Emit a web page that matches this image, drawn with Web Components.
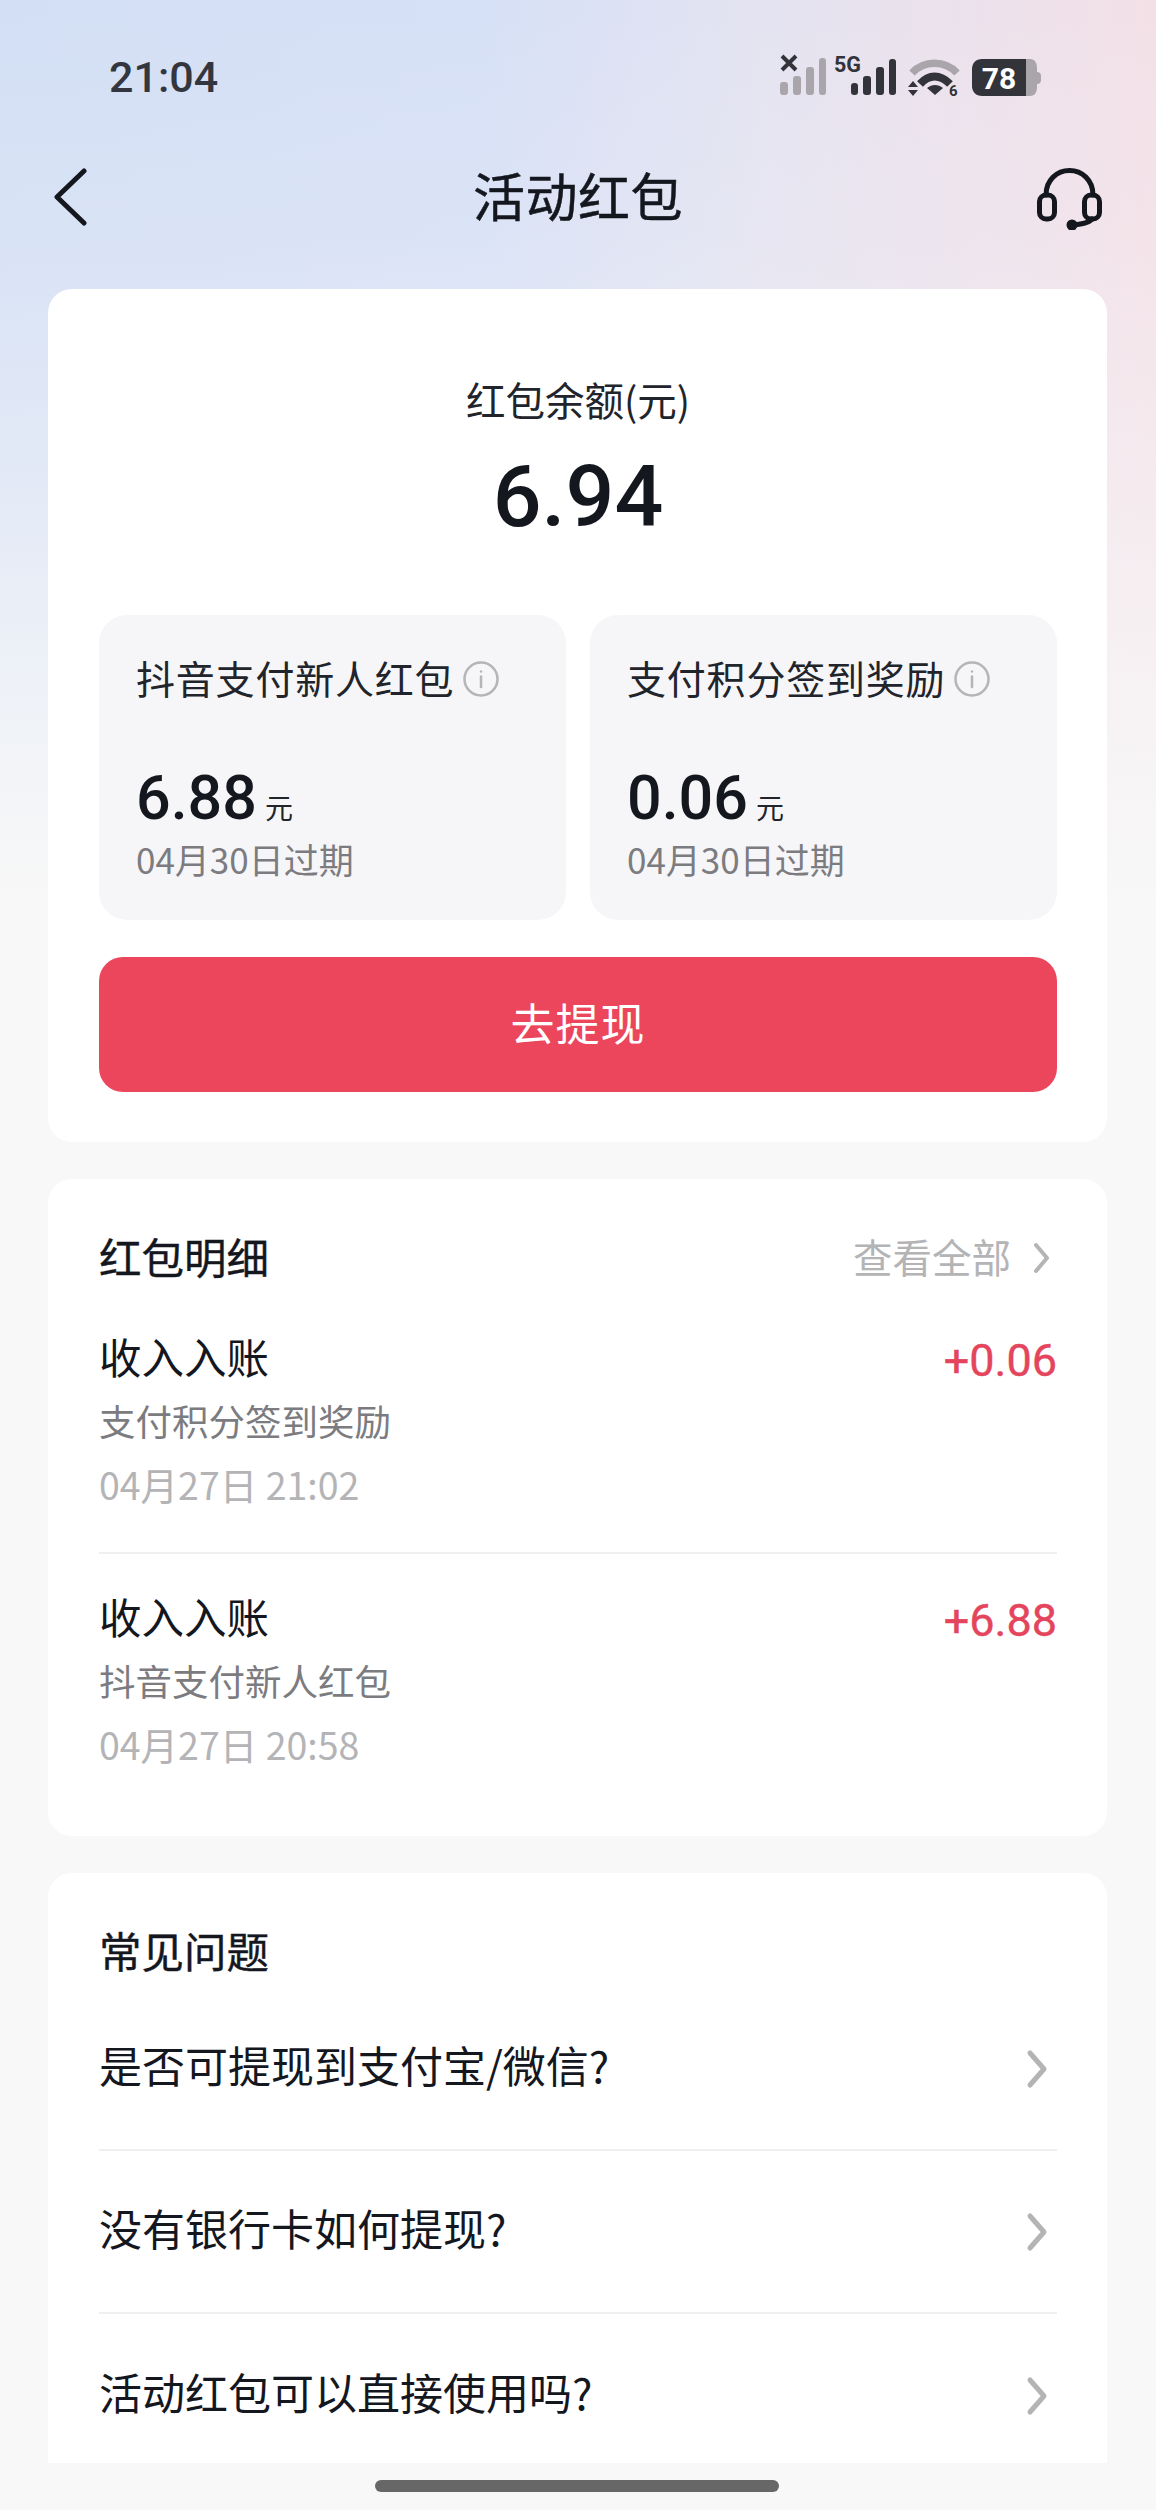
<!doctype html>
<html lang="zh">
<head>
<meta charset="utf-8">
<title>活动红包</title>
<style>
  html, body { margin: 0; padding: 0; background: #f8f8f8; }
  body { font-family: "Noto Sans CJK SC", "Noto Sans", sans-serif; color: #15171f; }
</style>
</head>
<body>
<red-page>
  <status-bar></status-bar>
  <nav-bar title="活动红包"></nav-bar>
  <balance-card label="红包余额(元)" amount="6.94" action="去提现">
    <sub-card title="抖音支付新人红包" amount="6.88" expire="04月30日过期"></sub-card>
    <sub-card title="支付积分签到奖励" amount="0.06" expire="04月30日过期"></sub-card>
  </balance-card>
  <detail-card title="红包明细" more="查看全部">
    <detail-row title="收入入账" source="支付积分签到奖励" time="04月27日 21:02" amount="+0.06"></detail-row>
    <detail-row title="收入入账" source="抖音支付新人红包" time="04月27日 20:58" amount="+6.88"></detail-row>
  </detail-card>
  <faq-card title="常见问题">
    <faq-row text="是否可提现到支付宝/微信?"></faq-row>
    <faq-row text="没有银行卡如何提现?"></faq-row>
    <faq-row text="活动红包可以直接使用吗?"></faq-row>
  </faq-card>
</red-page>

<script>
  const NUM_FONT = 'Roboto, "Noto Sans CJK SC", sans-serif';
  const CJK_FONT = '"Noto Sans CJK SC", sans-serif';

  function define(name, css, render) {
    customElements.define(name, class extends HTMLElement {
      connectedCallback() {
        if (this.shadowRoot) return;
        const root = this.attachShadow({mode: 'open'});
        root.innerHTML = '<style>' + css + '</style>' + render(n => this.getAttribute(n) || '');
      }
    });
  }

  const chevron = (w, h, color, sw) => `<svg width="${w}" height="${h}" viewBox="0 0 ${w} ${h}" fill="none">
    <path d="M${sw} ${sw}L${w - sw} ${h / 2}L${sw} ${h - sw}" stroke="${color}" stroke-width="${sw}" stroke-linecap="round" stroke-linejoin="round"/></svg>`;

  define('red-page', `
    :host {
      display: flex; flex-direction: column;
      width: 1156px; height: 2510px; overflow: hidden; position: relative;
      background:
        linear-gradient(to bottom, rgba(248,248,248,0) 0, rgba(248,248,248,.15) 240px, rgba(248,248,248,.45) 500px, rgba(248,248,248,.75) 700px, rgba(248,248,248,1) 900px),
        linear-gradient(90deg, #d3dff5 0%, #d6e0f6 42%, #e4e3f1 66%, #f3e0e7 100%);
    }
    .home {
      position: absolute; left: 375px; top: 2480px; width: 404px; height: 12px;
      border-radius: 6px; background: #676767;
    }
  `, () => `<slot></slot><div class="home"></div>`);

  define('status-bar', `
    :host { display: flex; justify-content: space-between; align-items: center; height: 154px; padding: 0 111px 0 109px; box-sizing: border-box; }
    .time { font: 500 43px/1 Roboto, sans-serif; color: #33363f; }
    svg { display: block; }
  `, () => `<span class="time">21:04</span>
    <svg width="270" height="50" viewBox="775 52 270 50">
      <g fill="#a9a5ab">
        <rect x="780" y="82" width="8" height="13" rx="3"/><rect x="793" y="76" width="8" height="19" rx="3"/>
        <rect x="806" y="67" width="8" height="28" rx="3"/><rect x="819" y="58" width="7" height="37" rx="3"/>
      </g>
      <path d="M782 56L796 70M796 56L782 70" stroke="#33333a" stroke-width="4"/>
      <text x="834" y="72" font-family="Roboto, sans-serif" font-weight="700" font-size="21.500" fill="#33333a">5G</text>
      <g fill="#33333a">
        <rect x="851" y="83" width="7" height="12" rx="3"/><rect x="863" y="76" width="8" height="19" rx="3"/>
        <rect x="876" y="67" width="8" height="28" rx="3"/><rect x="889" y="59" width="7" height="36" rx="3"/>
      </g>
      <path d="M912 73C924 60 945 60 957 73" fill="none" stroke="#a9a5ab" stroke-width="7.500"/>
      <path d="M920 84C929 74 940 74 950 84" fill="none" stroke="#33333a" stroke-width="8"/>
      <path d="M927 88C932 84 938 84 943 88L935 95Z" fill="#33333a"/>
      <path d="M908 87L913 81L918 87ZM908 90L918 90L913 96Z" fill="#33333a"/>
      <text x="949" y="96" font-family="Roboto, sans-serif" font-weight="700" font-size="15" fill="#33333a">6</text>
      <path d="M1026 59H1030C1035 59 1037 63 1037 68V72C1040 72 1041 74 1041 76V80C1041 82 1040 84 1037 84V87C1037 92 1035 96 1030 96H1026Z" fill="#a9a5ab"/>
      <path d="M982 59H1026V96H982C976 96 972 92 972 86V69C972 63 976 59 982 59Z" fill="#33333a"/>
      <text x="999" y="89" text-anchor="middle" font-family="Roboto, sans-serif" font-weight="700" font-size="30" fill="#fff">78</text>
    </svg>`);

  define('nav-bar', `
    :host { display: grid; grid-template-columns: 1fr auto 1fr; align-items: center; height: 86px; padding: 0 54px; margin-bottom: 49px; }
    h1 { font: 400 52px/1 ${CJK_FONT}; margin: -5px 0 0; color: #15171f; letter-spacing: .5px; -webkit-text-stroke: .5px #15171f; }
    svg { display: block; }
    .end { justify-self: end; margin-top: 4px; }
  `, a => `
    <svg width="34" height="58" viewBox="0 0 34 58" fill="none">
      <path d="M30 3L3 29L30 55" stroke="#15171f" stroke-width="5" stroke-linecap="round" stroke-linejoin="round"/></svg>
    <h1>${a('title')}</h1>
    <svg class="end" width="65" height="62" viewBox="0 0 65 62" fill="none" stroke="#15171f" stroke-width="5" stroke-linecap="round">
      <path d="M9 27C9 12 20 2.500 32.500 2.500C45 2.500 56 12 56 27"/>
      <rect x="2.500" y="27" width="15" height="24" rx="6.500"/>
      <rect x="47.500" y="27" width="15" height="24" rx="6.500"/>
      <path d="M55 51C52 55 45 56 37 57"/>
      <circle cx="35" cy="57" r="3" fill="#15171f"/>
    </svg>`);

  define('balance-card', `
    :host { display: block; margin: 0 49px 37px 48px; background: #fff; border-radius: 24px; padding: 82px 50px 50px 51px; height: 853px; box-sizing: border-box; }
    .label { font: 400 39.500px/56px ${CJK_FONT}; text-align: center; color: #22242b; }
    .amount { font: 500 86px/100px ${NUM_FONT}; text-align: center; color: #15171f; margin-top: 20px; }
    .subs { display: grid; grid-template-columns: 467px 467px; gap: 24px; margin-top: 68px; }
    button {
      display: block; width: 100%; height: 135px; margin-top: 37px; border: 0; border-radius: 24px; padding-bottom: 6px;
      background: #ec465d; color: #fff; font: 400 44px/1 ${CJK_FONT}; letter-spacing: 1px;
    }
  `, a => `
    <div class="label">${a('label')}</div>
    <div class="amount">${a('amount')}</div>
    <div class="subs"><slot></slot></div>
    <button>${a('action')}</button>`);

  define('sub-card', `
    :host { display: block; height: 305px; box-sizing: border-box; background: #f6f6f8; border-radius: 28px; padding: 35px 0 0 37px; }
    .title { display: flex; align-items: center; font: 400 39px/54px ${CJK_FONT}; color: #22242b; white-space: nowrap; letter-spacing: .8px; }
    svg { margin-left: 9px; flex: none; margin-top: 3px; }
    .value { display: flex; align-items: baseline; margin-top: 56px; height: 76px; }
    .num { font: 500 61px/76px ${NUM_FONT}; color: #15171f; }
    .unit { font: 400 28px/1 ${CJK_FONT}; color: #22242b; margin-left: 8px; }
    .exp { font: 400 35px/46px ${CJK_FONT}; color: #7c7c80; margin-top: 0; }
  `, a => `
    <div class="title">${a('title')}
      <svg width="36" height="36" viewBox="0 0 36 36" fill="none" stroke="#b5b5b7" stroke-width="2.500">
        <circle cx="18" cy="18" r="16.500"/><path d="M18 15.500V26" stroke-linecap="round"/><circle cx="18" cy="10.500" r="1.200" fill="#b5b5b7" stroke="none"/>
      </svg></div>
    <div class="value"><span class="num">${a('amount')}</span><span class="unit">元</span></div>
    <div class="exp">${a('expire')}</div>`);

  define('detail-card', `
    :host { display: block; margin: 0 49px 37px 48px; background: #fff; border-radius: 24px; padding: 48px 50px 0 51px; height: 657px; box-sizing: border-box; }
    header { display: flex; justify-content: space-between; align-items: center; height: 58px; margin-bottom: 9px; }
    h2 { font: 400 42.500px/58px ${CJK_FONT}; margin: 0; color: #15171f; -webkit-text-stroke: .4px #15171f; }
    .more { display: flex; align-items: center; gap: 21px; font: 400 39.500px/58px ${CJK_FONT}; color: #b4b4b6; }
    svg { display: block; margin-right: 6px; margin-top: 4px; }
  `, a => `
    <header><h2>${a('title')}</h2><span class="more">${a('more')}${chevron(19, 34, '#b4b4b6', 4)}</span></header>
    <slot></slot>`);

  define('detail-row', `
    :host { display: flex; justify-content: space-between; box-sizing: border-box; height: 260px; padding-top: 33px; border-bottom: 2px solid #efefef; }
    :host(:last-child) { border-bottom: 0; }
    .title { font: 400 42.500px/58px ${CJK_FONT}; color: #15171f; }
    .src { font: 400 36.500px/50px ${CJK_FONT}; color: #7c7c80; margin-top: 11px; }
    .time { font: 400 37.500px/50px ${CJK_FONT}; color: #b4b4b6; margin-top: 13px; }
    .amount { font: 400 45px/58px ${NUM_FONT}; color: #e4455d; margin-top: 5px; -webkit-text-stroke: .4px #e4455d; }
  `, a => `
    <div><div class="title">${a('title')}</div><div class="src">${a('source')}</div><div class="time">${a('time')}</div></div>
    <div class="amount">${a('amount')}</div>`);

  define('faq-card', `
    :host { display: block; margin: 0 49px 0 48px; background: #fff; border-radius: 24px 24px 0 0; padding: 48px 50px 0 51px; height: 590px; box-sizing: border-box; }
    h2 { font: 400 42.500px/58px ${CJK_FONT}; margin: 0 0 9px; color: #15171f; -webkit-text-stroke: .4px #15171f; }
  `, a => `<h2>${a('title')}</h2><slot></slot>`);

  define('faq-row', `
    :host { display: flex; justify-content: space-between; align-items: center; height: 163px; box-sizing: border-box; border-bottom: 2px solid #efefef; color: #15171f; }
    :host(:last-child) { border-bottom: 0; }
    span { font: 400 43px/58px ${CJK_FONT}; margin-bottom: 10px; }
    svg { margin-right: 8px; }
  `, a => `<span>${a('text')}</span>${chevron(24, 42, '#b4b4b6', 5)}`);
</script>
</body>
</html>
